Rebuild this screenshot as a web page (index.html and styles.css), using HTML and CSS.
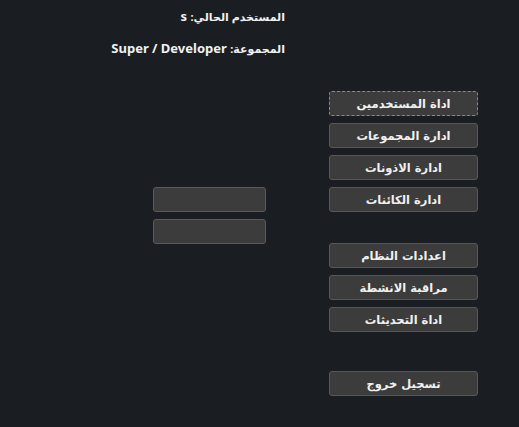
FILE: index.html
```html
<!DOCTYPE html>
<html lang="ar">
<head>
<meta charset="utf-8">
<link rel="stylesheet" href="styles.css">
</head>
<body>
<div class="page">
  <div class="info">
    <div class="line" dir="rtl"><span class="ar">المستخدم الحالي:</span> s</div>
    <div class="line" dir="rtl"><span class="ar">المجموعة:</span> Super / Developer</div>
  </div>
  <div class="main">
    <div class="inputs">
      <input class="field" type="text">
      <input class="field" type="text">
    </div>
    <div class="menu">
      <button class="btn focus">اداة المستخدمين</button>
      <button class="btn">ادارة المجموعات</button>
      <button class="btn">ادارة الاذونات</button>
      <button class="btn">ادارة الكائنات</button>
      <button class="btn sep1">اعدادات النظام</button>
      <button class="btn">مراقبة الانشطة</button>
      <button class="btn">اداة التحديثات</button>
      <button class="btn sep2">تسجيل خروج</button>
    </div>
  </div>
</div>
</body>
</html>
```
FILE: styles.css
```css
html, body {
  margin: 0;
  padding: 0;
  background: #1a1e22;
  width: 519px;
  height: 427px;
  overflow: hidden;
}
.page {
  font-family: "Noto Sans", "DejaVu Sans", sans-serif;
  color: #f0f0f0;
}
.info {
  width: 285px;
  padding-top: 6px;
  display: flex;
  flex-direction: column;
  gap: 11px;
}
.line {
  font-size: 13px;
  font-weight: bold;
  line-height: 20px;
  text-align: right;
}
.ar {
  font-size: 11px;
}
.main {
  display: flex;
  margin-top: 32px;
}
.inputs {
  margin-left: 153px;
  margin-top: 96px;
  display: flex;
  flex-direction: column;
  gap: 7px;
}
.field {
  box-sizing: border-box;
  width: 113px;
  height: 25px;
  margin: 0;
  background: #3c3c3c;
  border: 1px solid #5a5a5a;
  border-radius: 3px;
}
.menu {
  margin-left: 63px;
  display: flex;
  flex-direction: column;
  gap: 7px;
}
.btn {
  box-sizing: border-box;
  width: 149px;
  height: 25px;
  margin: 0;
  padding: 0;
  background: #3c3c3c;
  border: 1px solid #585858;
  border-radius: 3px;
  color: #f0f0f0;
  font-family: "DejaVu Sans", sans-serif;
  font-size: 11.5px;
  font-weight: bold;
  line-height: 20px;
}
.btn.focus {
  border: 1px dashed #8a8a8a;
}
.btn.sep1 {
  margin-top: 24px;
}
.btn.sep2 {
  margin-top: 32px;
}
```
